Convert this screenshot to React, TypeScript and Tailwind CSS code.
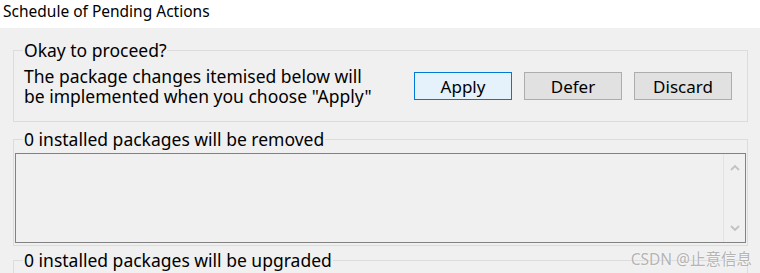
const ui = { fontFamily: '"Noto Sans", "Noto Sans CJK SC", sans-serif' }

function Button({ label, primary }: { label: string; primary?: boolean }) {
  return (
    <button
      className={
        primary
          ? 'w-[98px] h-[28px] border border-[#0078d7] bg-[#e5f1fb] text-[17px] leading-none text-black'
          : 'w-[98px] h-[28px] border border-[#adadad] bg-[#e1e1e1] text-[17px] leading-none text-black'
      }
    >
      {label}
    </button>
  )
}

function GroupLabel({ children }: { children: string }) {
  return (
    <legend className="ml-[9px] px-[1px] h-[20px] text-[17.5px] leading-[20px] text-black whitespace-nowrap">
      {children}
    </legend>
  )
}

export default function App() {
  return (
    <div className="relative w-[760px] h-[273px] overflow-hidden bg-[#f0f0f0]" style={ui}>
      <div className="h-[28px] bg-white pl-[3px] text-[15.5px] leading-[23px] text-black">
        Schedule of Pending Actions
      </div>

      <fieldset className="ml-[13px] mt-[12px] w-[735px] border border-[#dcdcdc] pr-[15px] pb-[15px]">
        <GroupLabel>Okay to proceed?</GroupLabel>
        <div className="flex items-start pt-[6px]">
          <div className="pl-[10px] text-[17.5px] leading-[20px] text-black">
            <div>The package changes itemised below will</div>
            <div>be implemented when you choose "Apply"</div>
          </div>
          <div className="ml-auto mt-[6px] flex gap-[12px]">
            <Button label="Apply" primary />
            <Button label="Defer" />
            <Button label="Discard" />
          </div>
        </div>
      </fieldset>

      <fieldset className="ml-[13px] mt-[7px] w-[735px] border border-[#dcdcdc] pt-[4px] pb-[2px]">
        <GroupLabel>0 installed packages will be removed</GroupLabel>
        <div className="ml-[1px] flex h-[90px] w-[731px] border border-[#828282] bg-[#f0f0f0]">
          <div className="flex-1" />
          <div className="flex w-[22px] flex-col items-center justify-between border-l border-[#e3e3e3] py-[10px] text-[#c2c2c2]">
            <svg width="10" height="7" viewBox="0 0 10 7" fill="none" stroke="currentColor" strokeWidth="1.8">
              <path d="M1 6l4-4 4 4" />
            </svg>
            <svg width="10" height="7" viewBox="0 0 10 7" fill="none" stroke="currentColor" strokeWidth="1.8">
              <path d="M1 1l4 4 4-4" />
            </svg>
          </div>
        </div>
      </fieldset>

      <fieldset className="ml-[13px] mt-[4px] w-[735px] h-[60px] border border-[#dcdcdc]">
        <GroupLabel>0 installed packages will be upgraded</GroupLabel>
      </fieldset>

      <div className="absolute right-[8px] bottom-[6px] text-[15.5px] leading-none text-[#b4b4b4] [text-shadow:0_0_2px_#ffffff]">
        CSDN @止意信息
      </div>
    </div>
  )
}
